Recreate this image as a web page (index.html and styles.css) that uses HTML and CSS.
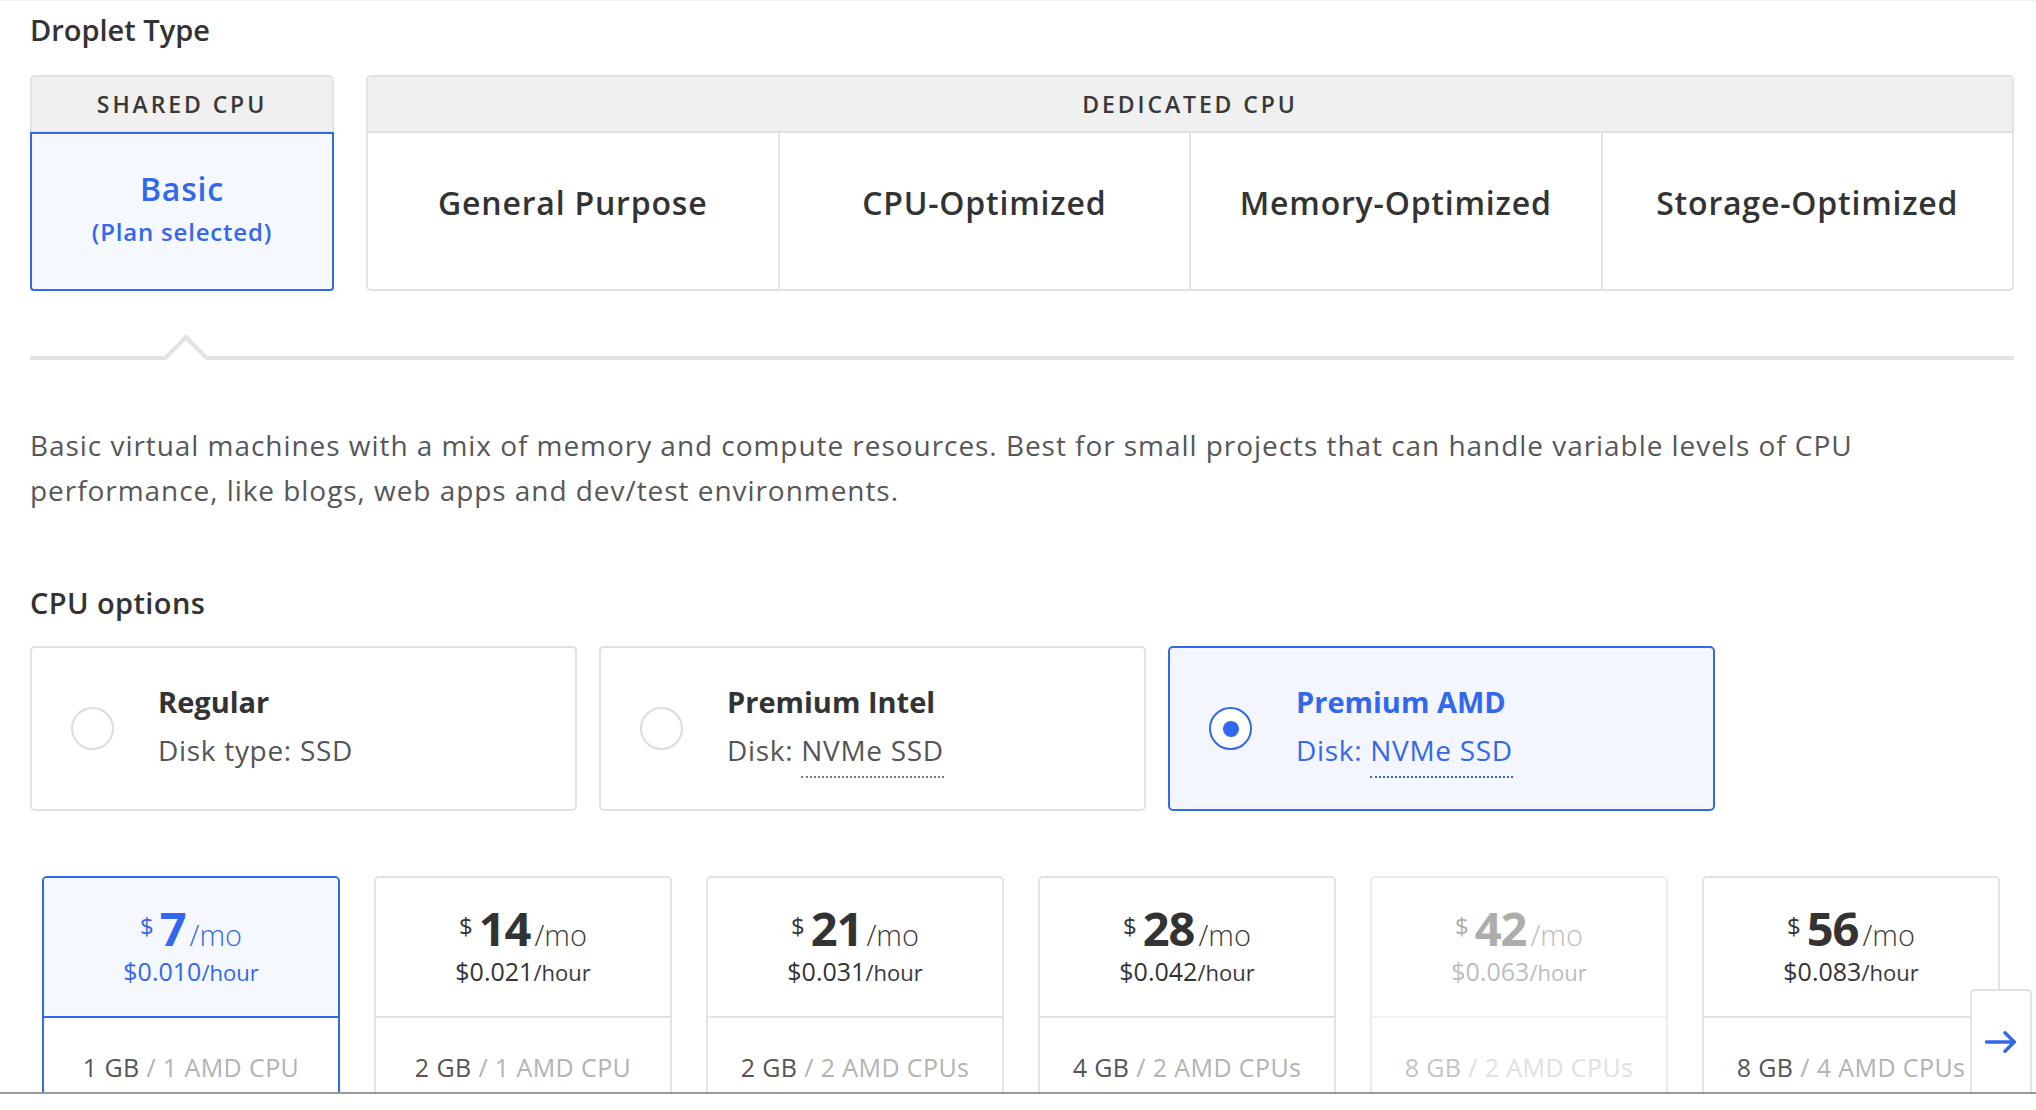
FILE: index.html
```html
<!DOCTYPE html>
<html lang="en">
<head>
<meta charset="utf-8">
<title>Droplet Type</title>
<link rel="stylesheet" href="styles.css">
</head>
<body>
<div class="topline"></div>
<main class="page">
  <h2 class="section-title title-droplet">Droplet Type</h2>

  <div class="type-tabs">
    <div class="tab-group shared">
      <div class="tab-header">SHARED CPU</div>
      <div class="tab-cells">
        <div class="tab-cell selected">
          <span class="cell-name">Basic</span>
          <span class="cell-sub">(Plan selected)</span>
        </div>
      </div>
    </div>
    <div class="tab-group dedicated">
      <div class="tab-header">DEDICATED CPU</div>
      <div class="tab-cells">
        <div class="tab-cell"><span class="cell-name">General Purpose</span></div>
        <div class="tab-cell"><span class="cell-name">CPU-Optimized</span></div>
        <div class="tab-cell"><span class="cell-name">Memory-Optimized</span></div>
        <div class="tab-cell"><span class="cell-name">Storage-Optimized</span></div>
      </div>
    </div>
  </div>

  <div class="tab-rule"><span class="tab-caret"></span></div>

  <p class="type-desc">Basic virtual machines with a mix of memory and compute resources. Best for small projects that can handle variable levels of CPU performance, like blogs, web apps and dev/test environments.</p>

  <h2 class="section-title title-cpu">CPU options</h2>

  <div class="cpu-options">
    <div class="cpu-card">
      <span class="radio"></span>
      <span class="cpu-text">
        <span class="cpu-name">Regular</span>
        <span class="cpu-disk">Disk type: SSD</span>
      </span>
    </div>
    <div class="cpu-card">
      <span class="radio"></span>
      <span class="cpu-text">
        <span class="cpu-name">Premium Intel</span>
        <span class="cpu-disk">Disk: <span class="dotted">NVMe SSD</span></span>
      </span>
    </div>
    <div class="cpu-card selected">
      <span class="radio"><span class="radio-dot"></span></span>
      <span class="cpu-text">
        <span class="cpu-name">Premium AMD</span>
        <span class="cpu-disk">Disk: <span class="dotted">NVMe SSD</span></span>
      </span>
    </div>
  </div>

  <div class="plans">
    <div class="plan selected">
      <div class="plan-price">
        <div class="price-mo"><span class="cur">$</span><span class="amt">7</span><span class="per">/mo</span></div>
        <div class="price-hr"><span class="hr-amt">$0.010</span><span class="per-hr">/hour</span></div>
      </div>
      <div class="plan-spec"><span class="mem">1 GB</span><span class="cpu"> / 1 AMD CPU</span></div>
    </div>
    <div class="plan">
      <div class="plan-price">
        <div class="price-mo"><span class="cur">$</span><span class="amt">14</span><span class="per">/mo</span></div>
        <div class="price-hr"><span class="hr-amt">$0.021</span><span class="per-hr">/hour</span></div>
      </div>
      <div class="plan-spec"><span class="mem">2 GB</span><span class="cpu"> / 1 AMD CPU</span></div>
    </div>
    <div class="plan">
      <div class="plan-price">
        <div class="price-mo"><span class="cur">$</span><span class="amt">21</span><span class="per">/mo</span></div>
        <div class="price-hr"><span class="hr-amt">$0.031</span><span class="per-hr">/hour</span></div>
      </div>
      <div class="plan-spec"><span class="mem">2 GB</span><span class="cpu"> / 2 AMD CPUs</span></div>
    </div>
    <div class="plan">
      <div class="plan-price">
        <div class="price-mo"><span class="cur">$</span><span class="amt">28</span><span class="per">/mo</span></div>
        <div class="price-hr"><span class="hr-amt">$0.042</span><span class="per-hr">/hour</span></div>
      </div>
      <div class="plan-spec"><span class="mem">4 GB</span><span class="cpu"> / 2 AMD CPUs</span></div>
    </div>
    <div class="plan disabled">
      <div class="plan-price">
        <div class="price-mo"><span class="cur">$</span><span class="amt">42</span><span class="per">/mo</span></div>
        <div class="price-hr"><span class="hr-amt">$0.063</span><span class="per-hr">/hour</span></div>
      </div>
      <div class="plan-spec"><span class="mem">8 GB</span><span class="cpu"> / 2 AMD CPUs</span></div>
    </div>
    <div class="plan">
      <div class="plan-price">
        <div class="price-mo"><span class="cur">$</span><span class="amt">56</span><span class="per">/mo</span></div>
        <div class="price-hr"><span class="hr-amt">$0.083</span><span class="per-hr">/hour</span></div>
      </div>
      <div class="plan-spec"><span class="mem">8 GB</span><span class="cpu"> / 4 AMD CPUs</span></div>
    </div>

    <button class="scroll-next" type="button" aria-label="Next">
      <svg width="32" height="22" viewBox="0 0 32 22"><path d="M1.5 11H29.5M20 1.8l9.3 9.2-9.3 9.2" fill="none" stroke="#3367ee" stroke-width="3.4" stroke-linecap="round" stroke-linejoin="round"/></svg>
    </button>
  </div>
</main>
<div class="bottom-bar"></div>
</body>
</html>
```

FILE: styles.css
```css
html, body {
  overflow: hidden;
}

body {
  margin: 0;
  background: #fff;
  color: #333;
  font-family: "Open Sans", Lato, "Liberation Sans", sans-serif;
}

.topline {
  height: 1px;
  background: #f1f1f1;
}

.page {
  padding: 0 22px 0 30px;
}

.section-title {
  margin: 0;
  font-size: 29px;
  line-height: 36px;
  font-weight: 600;
  color: #333;
}

.title-droplet {
  margin-top: 11px;
}

.title-cpu {
  margin-top: 72px;
  letter-spacing: 0.4px;
}

/* ---------- Droplet type tabs ---------- */
.type-tabs {
  display: flex;
  gap: 32px;
  height: 216px;
  margin-top: 27px;
}

.tab-group {
  display: flex;
  flex-direction: column;
}

.shared {
  width: 304px;
}

.dedicated {
  flex: 1;
  border: 2px solid #e2e2e2;
  border-radius: 5px;
  overflow: hidden;
}

.tab-header {
  display: flex;
  align-items: center;
  justify-content: center;
  box-sizing: border-box;
  background: #f0f0f0;
  font-size: 23px;
  letter-spacing: 2.9px;
  font-weight: 600;
  color: #383838;
}

.shared .tab-header {
  height: 57px;
  border: 2px solid #e2e2e2;
  border-bottom-width: 1px;
  border-radius: 5px 5px 0 0;
}

.dedicated .tab-header {
  height: 56px;
  border-bottom: 2px solid #e2e2e2;
}

.tab-cells {
  flex: 1;
  display: flex;
}

.tab-cell {
  flex: 1;
  display: flex;
  flex-direction: column;
  align-items: center;
  justify-content: center;
  color: #333;
}

.dedicated .tab-cell {
  padding-bottom: 16px;
  border-left: 2px solid #e4e4e4;
}

.dedicated .tab-cell:first-child {
  border-left: 0;
}

.shared .tab-cell.selected {
  border: 2px solid #3367ee;
  border-radius: 0 0 4px 4px;
  background: #f5f8ff;
  color: #3367ee;
}

.cell-name {
  font-size: 32px;
  line-height: 40px;
  font-weight: 600;
  letter-spacing: 0.8px;
}

.cell-sub {
  font-size: 24px;
  line-height: 46px;
  font-weight: 600;
  letter-spacing: 0.8px;
}

.tab-rule {
  position: relative;
  height: 4px;
  margin-top: 65px;
  background: #e2e2e2;
}

.tab-caret {
  position: absolute;
  left: 140px;
  top: -15px;
  width: 32px;
  height: 32px;
  box-sizing: border-box;
  background: #fff;
  border-top: 4px solid #e2e2e2;
  border-left: 4px solid #e2e2e2;
  transform: rotate(45deg);
}

.type-desc {
  margin: 63px 0 0;
  font-size: 28px;
  line-height: 45px;
  letter-spacing: 0.95px;
  color: #575757;
}

/* ---------- CPU options ---------- */
.cpu-options {
  display: flex;
  gap: 22px;
  margin-top: 25px;
}

.cpu-card {
  display: flex;
  align-items: center;
  width: 547px;
  height: 165px;
  box-sizing: border-box;
  padding-left: 39px;
  border: 2px solid #e2e2e2;
  border-radius: 5px;
  background: #fff;
}

.radio {
  flex: none;
  display: flex;
  align-items: center;
  justify-content: center;
  width: 43px;
  height: 43px;
  box-sizing: border-box;
  margin-right: 44px;
  border: 2px solid #dcdcdc;
  border-radius: 50%;
  background: #fff;
}

.radio-dot {
  width: 16px;
  height: 16px;
  border-radius: 50%;
  background: #3367ee;
}

.cpu-text {
  display: flex;
  flex-direction: column;
  margin-top: 5px;
}

.cpu-name {
  font-size: 29px;
  line-height: 38px;
  font-weight: 700;
  color: #333;
}

.cpu-disk {
  margin-top: 11px;
  padding-bottom: 11px;
  font-size: 28px;
  line-height: 36px;
  letter-spacing: 0.7px;
  color: #555;
}

.dotted {
  padding-bottom: 7px;
  border-bottom: 2px dotted #7a7a7a;
}

.cpu-card.selected {
  border-color: #3367ee;
  background: #f3f6fe;
}

.cpu-card.selected .radio {
  border-color: #3367ee;
}

.cpu-card.selected .cpu-name,
.cpu-card.selected .cpu-disk {
  color: #3367ee;
}

.cpu-card.selected .dotted {
  border-bottom-color: #3367ee;
}

/* ---------- Plans ---------- */
.plans {
  position: relative;
  display: flex;
  gap: 34px;
  margin-top: 65px;
  padding-left: 12px;
}

.plan {
  flex: none;
  width: 298px;
  box-sizing: border-box;
  border: 2px solid #e2e2e2;
  border-radius: 5px;
  background: #fff;
  overflow: hidden;
}

.plan-price {
  height: 140px;
  box-sizing: border-box;
  padding-top: 25px;
  border-bottom: 2px solid #e2e2e2;
  text-align: center;
  color: #333;
}

.price-mo {
  font-size: 47px;
  line-height: 50px;
  white-space: nowrap;
}

.cur {
  font-size: 24px;
  line-height: 1;
  vertical-align: 11px;
  margin-right: 6px;
}

.amt {
  font-weight: 700;
  letter-spacing: -1px;
  line-height: 1;
}

.per {
  margin-left: 4px;
  font-size: 29px;
  line-height: 1;
  font-weight: 300;
  color: #3a3a3a;
}

.price-hr {
  font-size: 25px;
  line-height: 36px;
  white-space: nowrap;
}

.per-hr {
  font-size: 22px;
  line-height: 1;
  color: #3a3a3a;
}

.plan-spec {
  height: 120px;
  box-sizing: border-box;
  padding-top: 34px;
  text-align: center;
  font-size: 25px;
  line-height: 30px;
  letter-spacing: 0.4px;
  white-space: nowrap;
}

.mem {
  color: #555;
}

.cpu {
  color: #b3b3b3;
}

.plan.selected {
  border-color: #3367ee;
}

.plan.selected .plan-price {
  background: #f5f8ff;
  border-bottom-color: #3367ee;
  color: #3367ee;
}

.plan.selected .per,
.plan.selected .per-hr {
  color: #3367ee;
}

.plan.disabled {
  border-color: #ececec;
}

.plan.disabled .plan-price {
  border-bottom-color: #f0f0f0;
  color: #adadad;
}

.plan.disabled .per,
.plan.disabled .price-hr,
.plan.disabled .per-hr {
  color: #bdbdbd;
}

.plan.disabled .mem {
  color: #c4c4c4;
}

.plan.disabled .cpu {
  color: #e0e0e0;
}

.scroll-next {
  position: absolute;
  right: -18px;
  top: 113px;
  display: flex;
  justify-content: center;
  align-items: flex-start;
  width: 62px;
  height: 160px;
  box-sizing: border-box;
  padding: 40px 0 0;
  border: 2px solid #e2e2e2;
  border-radius: 5px;
  background: #fff;
  cursor: pointer;
}

.bottom-bar {
  position: fixed;
  left: 0;
  right: 0;
  bottom: 0;
  height: 16px;
  background: #fff;
  border-top: 2px solid #9a9a9a;
}
```
